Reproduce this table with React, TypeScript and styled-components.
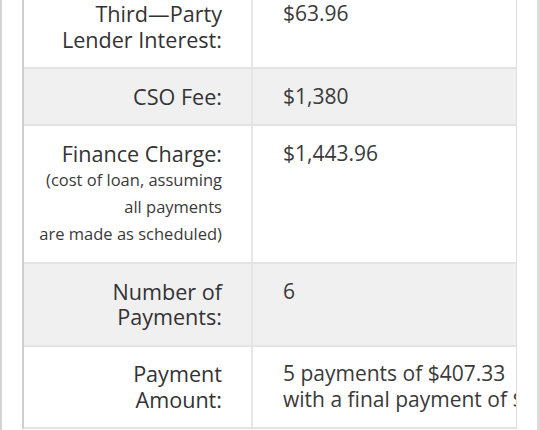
import React from 'react'
import styled, { createGlobalStyle } from 'styled-components'

const GlobalStyle = createGlobalStyle`
  html, body {
    margin: 0;
    padding: 0;
    background: #fff;
    overflow: hidden;
  }
  * {
    box-sizing: border-box;
  }
`

const Frame = styled.div`
  width: 540px;
  height: 430px;
  overflow: hidden;
  padding: 0 20px 0 20px;
  border-left: 2px solid #d4d4d4;
  border-right: 3px solid #dcdcdc;
  background: #fff;
  font-family: 'Open Sans', 'Liberation Sans', sans-serif;
  color: #333;
`

const TableClip = styled.div`
  width: 495px;
  margin-top: -15.5px;
  overflow: hidden;
  border-left: 2px solid #cfcfcf;
  border-right: 1px solid #dedede;
`

const Row = styled.div<{ $shaded?: boolean }>`
  display: grid;
  grid-template-columns: 229px 360px;
  width: 589px;
  background: ${p => (p.$shaded ? '#f0f0f0' : '#fff')};
  border-top: 2px solid #e3e3e3;
  &:last-child {
    border-bottom: 2px solid #e3e3e3;
  }
`

const Label = styled.div`
  text-align: right;
  padding: 14.75px 29px 14.75px 8px;
  border-right: 2px solid #e6e6e6;
  font-size: 21.6px;
  line-height: 25.5px;
`

const Note = styled.div`
  font-size: 16.5px;
  line-height: 27px;
  color: #3a3a3a;
`

const Value = styled.div`
  padding: 14.75px 30px;
  font-size: 21px;
  line-height: 25.5px;
  color: #3a3a3a;
  white-space: nowrap;
`

export default function App() {
  return (
    <>
      <GlobalStyle />
      <Frame>
        <TableClip>
          <Row>
            <Label>
              Third—Party
              <br />
              Lender Interest:
            </Label>
            <Value>$63.96</Value>
          </Row>
          <Row $shaded>
            <Label>CSO Fee:</Label>
            <Value>$1,380</Value>
          </Row>
          <Row>
            <Label>
              Finance Charge:
              <Note>
                (cost of loan, assuming
                <br />
                all payments
                <br />
                are made as scheduled)
              </Note>
            </Label>
            <Value>$1,443.96</Value>
          </Row>
          <Row $shaded>
            <Label>
              Number of
              <br />
              Payments:
            </Label>
            <Value>6</Value>
          </Row>
          <Row>
            <Label>
              Payment
              <br />
              Amount:
            </Label>
            <Value>
              5 payments of $407.33
              <br />
              with a final payment of $407.31
            </Value>
          </Row>
        </TableClip>
      </Frame>
    </>
  )
}
